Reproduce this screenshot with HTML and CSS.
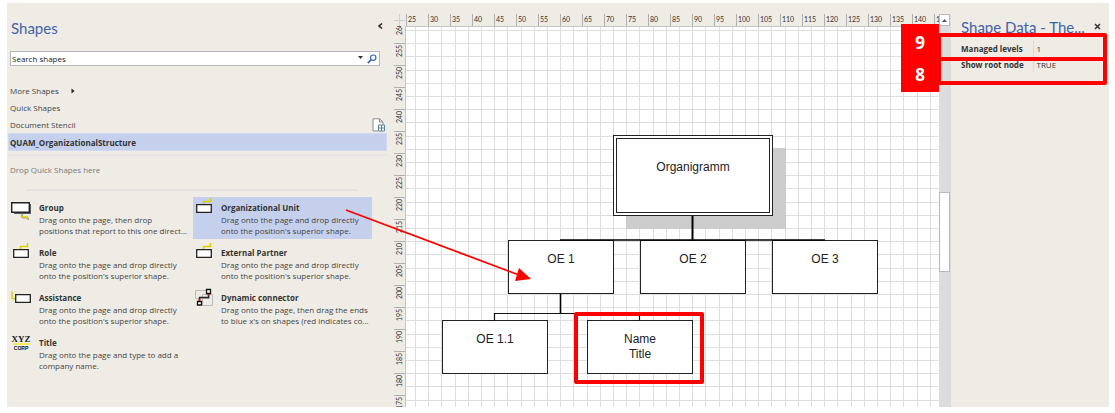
FILE: index.html
```html
<!DOCTYPE html>
<html lang="en">
<head>
<meta charset="utf-8">
<title>Organigramm</title>
<link rel="stylesheet" href="styles.css">
</head>
<body>
<div class="app">
  <aside class="shapes">
    <header class="shapes-head">
      <h1 class="title">Shapes</h1>
      <button class="plain" aria-label="Collapse"><svg width="6" height="8" viewBox="0 0 6 8"><path d="M5 1.500 2 4 5 6.500" fill="none" stroke="#222" stroke-width="1.600"/></svg></button>
    </header>
    <div class="search">
      <input class="search-input" type="text" value="Search shapes" aria-label="Search shapes">
      <button class="plain" aria-label="Search options"><svg width="5" height="5" viewBox="0 0 5 5"><path d="M0 0h5L2.500 3z" fill="#333"/></svg></button>
      <button class="plain" aria-label="Search"><svg width="10" height="10" viewBox="0 0 10 10"><circle cx="6.200" cy="3.700" r="2.700" fill="#fff" stroke="#3c68b5" stroke-width="1.200"/><path d="M4.200 5.700.8 9.100" stroke="#3c68b5" stroke-width="1.800"/></svg></button>
    </div>
    <nav class="stencils">
      <button class="stencil">More Shapes <svg class="more" width="4" height="6" viewBox="0 0 4 6"><path d="M.5.500v5l3-2.500z" fill="#222"/></svg></button>
      <button class="stencil">Quick Shapes</button>
      <button class="stencil">Document Stencil
        <svg class="doc" width="14" height="14" viewBox="0 0 14 14"><path d="M6 13H1V.8h6.500L11 4v3M7.500.8V4H11" fill="#fff" stroke="#8a8d90"/><path d="M6.500 7h6v6h-6zM9.500 7v6M6.500 10h6" fill="#fff" stroke="#5b8299"/></svg></button>
      <button class="stencil stencil-on">QUAM_OrganizationalStructure</button>
    </nav>
    <p class="drop">Drop Quick Shapes here</p>
    <ul class="masters">
      <li class="master">
        <svg class="icon" width="24" height="28" viewBox="0 0 24 28"><path d="M3 7h17v10H3z" fill="#555b60"/><path d="M.700 5.700h17.600v9.600H.700z" fill="#fff" stroke="#222" stroke-width="1.400"/><path d="M11.500 17v4h6v2" fill="none" stroke="#999"/><path d="M10.500 17v3h6v3" fill="none" stroke="#d8d000" stroke-width="1.400"/></svg>
        <div><h2 class="name">Group</h2><p class="desc">Drag onto the page, then drop<br>positions that report to this one direct...</p></div>
      </li>
      <li class="master master-on">
        <svg class="icon" width="24" height="28" viewBox="0 0 24 28"><path d="M10.500 7V4.500h7V1" fill="none" stroke="#d8d000" stroke-width="1.500"/><path d="M3.700 7.700h14.600v7.600H3.700z" fill="#fff" stroke="#222" stroke-width="1.300"/></svg>
        <div><h2 class="name">Organizational Unit</h2><p class="desc">Drag onto the page and drop directly<br>onto the position's superior shape.</p></div>
      </li>
      <li class="master">
        <svg class="icon" width="24" height="28" viewBox="0 0 24 28"><path d="M9.500 7V4.500h7V1" fill="none" stroke="#d8d000" stroke-width="1.500"/><path d="M2.700 7.700h14.600v7.600H2.700z" fill="#fff" stroke="#222" stroke-width="1.300"/></svg>
        <div><h2 class="name">Role</h2><p class="desc">Drag onto the page and drop directly<br>onto the position's superior shape.</p></div>
      </li>
      <li class="master">
        <svg class="icon" width="24" height="28" viewBox="0 0 24 28"><path d="M10.500 7V4.500h7V1" fill="none" stroke="#d8d000" stroke-width="1.500"/><path d="M3.700 7.700h14.600v7.600H3.700z" fill="#fff" stroke="#222" stroke-width="1.300"/></svg>
        <div><h2 class="name">External Partner</h2><p class="desc">Drag onto the page and drop directly<br>onto the position's superior shape.</p></div>
      </li>
      <li class="master">
        <svg class="icon" width="24" height="28" viewBox="0 0 24 28"><path d="M1 4.500v7h3" fill="none" stroke="#d8d000" stroke-width="1.500"/><path d="M4.700 7.700h14.600v7.600H4.700z" fill="#fff" stroke="#222" stroke-width="1.300"/></svg>
        <div><h2 class="name">Assistance</h2><p class="desc">Drag onto the page and drop directly<br>onto the position's superior shape.</p></div>
      </li>
      <li class="master">
        <svg class="icon" width="24" height="28" viewBox="0 0 24 28"><path d="M2.500 3.500h14v8h-14zM9.500 7.500h10v11h-10z" fill="none" stroke="#bbb"/><path d="M6.500 14V10.500h9V6" fill="none" stroke="#222" stroke-width="1.300"/><path d="M15.500 8.500v-2M6.500 12v2.500" stroke="#e02020" stroke-width="2"/><path d="M13.500 2.500h4v4h-4zM4.500 14.500h4v3.500h-4z" fill="#fff" stroke="#111" stroke-width="1.300"/></svg>
        <div><h2 class="name">Dynamic connector</h2><p class="desc">Drag onto the page, then drag the ends<br>to blue x's on shapes (red indicates co...</p></div>
      </li>
      <li class="master">
        <svg class="icon" width="24" height="28" viewBox="0 0 24 28"><text class="logo-xyz" x="10" y="10" text-anchor="middle">XYZ</text><path d="M2 12h17" stroke="#f0ec20" stroke-width="1.500"/><text class="logo-corp" x="10" y="18" text-anchor="middle">CORP</text></svg>
        <div><h2 class="name">Title</h2><p class="desc">Drag onto the page and type to add a<br>company name.</p></div>
      </li>
    </ul>
  </aside>

  <main class="drawing">
    <div class="corner"></div>
    <div class="ruler-x"><span>25</span><span>30</span><span>35</span><span>40</span><span>45</span><span>50</span><span>55</span><span>60</span><span>65</span><span>70</span><span>75</span><span>80</span><span>85</span><span>90</span><span>95</span><span>100</span><span>105</span><span>110</span><span>115</span><span>120</span><span>125</span><span>130</span><span>135</span><span>140</span><span>145</span></div>
    <div class="ruler-y"><span>260</span><span>255</span><span>250</span><span>245</span><span>240</span><span>235</span><span>230</span><span>225</span><span>220</span><span>215</span><span>210</span><span>205</span><span>200</span><span>195</span><span>190</span><span>185</span><span>180</span><span>175</span></div>
    <div class="canvas">
      <svg class="grid" width="100%" height="100%">
        <defs><pattern id="mesh" x="9" y="3" width="66" height="66" patternUnits="userSpaceOnUse"><path d="M.5 0v66M13.500 0v66M26.500 0v66M40.500 0v66M53.500 0v66M0 .5h66M0 13.500h66M0 26.500h66M0 40.500h66M0 53.500h66" stroke="#dedede"/></pattern></defs>
        <rect width="100%" height="100%" fill="url(#mesh)"/>
      </svg>
      <div class="node root">Organigramm</div>
      <div class="node oe1">OE 1</div>
      <div class="node oe2">OE 2</div>
      <div class="node oe3">OE 3</div>
      <div class="node oe11">OE 1.1</div>
      <div class="node person">Name<br>Title</div>
      <svg class="grid" width="100%" height="100%"><path d="M286.500 189v25" fill="none" stroke="#000" stroke-width="2"/><path d="M154 213h265M154.500 267v19" fill="none" stroke="#000" stroke-width="1.600"/><path d="M88.500 294v-7.500h145v7.500" fill="none" stroke="#111" stroke-width="1.200"/></svg>
      <div class="mark"></div>
    </div>
    <div class="scroll">
      <button class="scroll-up" aria-label="Scroll up"><svg width="5" height="3" viewBox="0 0 5 3"><path d="M0 3h5L2.500 0z" fill="#555"/></svg></button>
      <div class="thumb"></div>
    </div>
  </main>

  <aside class="data">
    <header class="data-head">
      <h1 class="title">Shape Data - The...</h1>
      <button class="plain close" aria-label="Close"><svg width="7" height="7" viewBox="0 0 7 7"><path d="m1 1 5 5M6 1 1 6" stroke="#333" stroke-width="1.500"/></svg></button>
    </header>
    <table class="props">
      <tr><th scope="row">Managed levels</th><td>1</td></tr>
      <tr><th scope="row">Show root node</th><td>TRUE</td></tr>
    </table>
    <div class="callout callout-9"></div>
    <div class="callout callout-8"></div>
    <div class="badge"><span>9</span><span>8</span></div>
  </aside>

  <svg class="arrow" width="200" height="84" viewBox="0 0 200 84"><path d="M6 7 179 72" stroke="#f00" stroke-width="1.800"/><path d="m179 65 12 11-16 2z" fill="#f00"/></svg>
</div>
</body>
</html>
```
FILE: styles.css
```css
* { box-sizing: border-box; }
body {
  margin: 0;
  padding: 3px 6px 6px 7px;
  background: #fff;
  color: #444;
  font: 8px/11px "Open Sans", "Noto Sans", sans-serif;
}
h1, h2, p, ul { margin: 0; padding: 0; }
button, input { font: inherit; color: inherit; }
.app {
  position: relative;
  display: flex;
  height: calc(100vh - 9px);
  background: #efece5;
  overflow: hidden;
}
.title { min-width: 0; color: #4263a9; font: 400 15px/20px Lato, "Open Sans", sans-serif; white-space: nowrap; }
.plain { display: flex; padding: 0; border: 0; background: none; }

.shapes { flex: 0 0 387px; padding: 15px 7px 0 1px; }
.shapes-head { display: flex; justify-content: space-between; align-items: flex-start; padding: 0 4px 0 3px; }
.shapes-head .plain { padding-top: 4px; }
.search {
  display: flex;
  align-items: center;
  gap: 4px;
  height: 15px;
  margin: 13px 7px 0 2px;
  padding-right: 2px;
  border: 1px solid #b4b6b9;
  background: #fff;
  color: #222;
}
.search-input { flex: 1; min-width: 0; height: 13px; padding: 0 1px; border: 0; outline: 0; background: none; }
.stencils { display: flex; flex-direction: column; margin-top: 16px; border-bottom: 2px solid #e5e5e6; padding-bottom: 3px; }
.stencil {
  display: flex;
  align-items: center;
  height: 17px;
  padding: 0 0 0 2px;
  border: 0;
  background: none;
  text-align: left;
}
.more { margin-left: 12px; }
.doc { margin: 0 1px 0 auto; }
.stencil-on { height: 18px; border: 1px solid #cfdaf2; padding-left: 1px; background: #c5d0ed; font-weight: 700; color: #333; }
.drop { margin: 0 29px 0 18px; padding: 8px 0 14px; border-bottom: 2px solid #e3e3e4; color: #777; text-indent: -16px; }
.masters { display: grid; grid-template-columns: 179px 179px; gap: 3px; margin-top: 6px; padding-left: 3px; list-style: none; }
.master { display: flex; gap: 4px; height: 42px; padding-top: 5px; white-space: nowrap; }
.master-on { background: #c5d0ed; }
.icon { flex: none; margin-top: -5px; }
.name { font-size: 8px; line-height: 12px; font-weight: 700; color: #333; }
.logo-xyz { font: 700 9px "Liberation Serif", serif; fill: #222; }
.logo-corp { font: 700 5px "Liberation Sans", sans-serif; fill: #111; }

.drawing {
  flex: 1;
  min-width: 0;
  display: grid;
  grid-template-columns: 11px minmax(0, 1fr) 12px;
  grid-template-rows: 12px minmax(0, 1fr);
  padding-top: 11px;
}
.corner {
  background: linear-gradient(#d0d0d0, #d0d0d0) 50% 50% / 11px 1px no-repeat, linear-gradient(#d0d0d0, #d0d0d0) 50% 50% / 1px 12px no-repeat;
}
.ruler-x, .ruler-y { display: flex; overflow: hidden; font: 7px/10px Lato, "Open Sans", sans-serif; color: #333; }
.ruler-x { padding-left: 1px; }
.ruler-x span { flex: 0 0 22px; padding-left: 1px; border-left: 1px solid #aeb0b4; }
.ruler-y { flex-direction: column; }
.ruler-y span {
  flex: 0 0 22px;
  writing-mode: vertical-rl;
  transform: rotate(180deg);
  padding-bottom: 1px;
  border-bottom: 1px solid #aeb0b4;
  text-align: right;
}
.ruler-y span:first-child { margin-top: -5px; }
.canvas { position: relative; overflow: hidden; border: solid #c4c6c9; border-width: 1px 0 0 1px; background: #fff; }
.grid { position: absolute; inset: 0; }
.node {
  position: absolute;
  width: 106px;
  height: 54px;
  padding-top: 11px;
  border: 1px solid #222;
  background: #fff;
  color: #222;
  font: 12px/15px "Liberation Sans", Arial, sans-serif;
  text-align: center;
}
.root { left: 207px; top: 108px; width: 160px; height: 81px; padding-top: 21px; border: 4px double #222; box-shadow: 13px 13px 0 #ccc; }
.oe1 { left: 102px; top: 213px; }
.oe2 { left: 234px; top: 213px; }
.oe3 { left: 366px; top: 213px; }
.oe11 { left: 36px; top: 293px; }
.person { left: 181px; top: 293px; }
.mark { position: absolute; left: 168px; top: 285px; width: 130px; height: 72px; border: 4px solid #f00; border-radius: 2px; }
.scroll { grid-column: 3; grid-row: 1 / 3; background: #dcdcdc; }
.scroll-up { display: flex; align-items: center; justify-content: center; width: 11px; height: 12px; padding: 0; border: 1px solid #bbb; background: #fff; }
.thumb { width: 11px; height: 80px; margin-top: 166px; border: 1px solid #b8b8b8; background: #fff; }

.data { position: relative; flex: 0 0 158px; min-width: 0; padding: 14px 7px 0 10px; }
.data-head { display: flex; justify-content: space-between; align-items: flex-start; height: 23px; }
.close { padding: 6px 1px 0 0; }
.props { width: 100%; border-collapse: collapse; color: #333; }
.props th { width: 72px; height: 16px; padding: 0; text-align: left; white-space: nowrap; }
.props td { padding: 0 0 0 3px; border-left: 1px solid #dadada; }
.callout { position: absolute; left: -14px; right: 2px; height: 28px; border: 4px solid #f00; border-radius: 2px; }
.callout-9 { top: 30px; }
.callout-8 { top: 54px; }
.badge {
  position: absolute;
  left: -50px;
  top: 21px;
  display: flex;
  flex-direction: column;
  gap: 10px;
  width: 38px;
  padding: 8px 0 6px;
  background: #f00;
  color: #fff;
  font: 700 17px/22px "Open Sans", "Noto Sans", sans-serif;
  text-align: center;
}
.arrow { position: absolute; left: 333px; top: 200px; pointer-events: none; }
```
